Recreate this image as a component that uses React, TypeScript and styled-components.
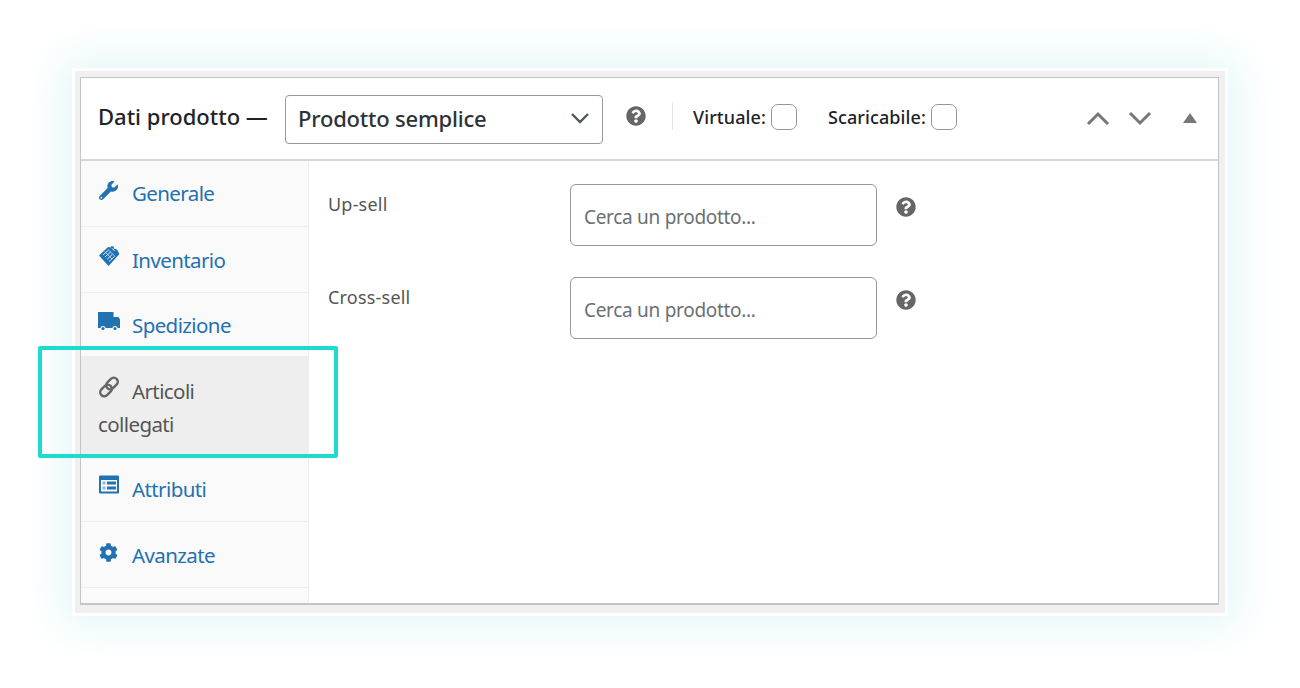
import React from "react";
import styled, { createGlobalStyle } from "styled-components";
import { FaWrench, FaCog, FaQuestionCircle } from "react-icons/fa";

const Global = createGlobalStyle`
  html, body { margin: 0; padding: 0; background: #fff; }
  body { width: 1300px; height: 688px; overflow: hidden; font-family: "Noto Sans", "Open Sans", sans-serif; }
`;
const Page = styled.div`
  position: relative;
  width: 1300px;
  height: 688px;
  padding: 68px 72px 0;
  box-sizing: border-box;
`;
const Frame = styled.div`
  width: 1156px;
  height: 548px;
  box-sizing: border-box;
  background: #f0f0f1;
  border: 3px solid #fff;
  padding: 6px 6px 8px 5px;
  box-shadow: 0 0 40px 8px rgba(190, 235, 240, 0.45);
`;
const Panel = styled.div`
  height: 100%;
  box-sizing: border-box;
  background: #fff;
  border: 1px solid #c3c4c7;
  border-width: 1px 1px 2px 1px;
  display: flex;
  flex-direction: column;
`;
const Header = styled.div`
  height: 83px;
  flex: none;
  box-sizing: border-box;
  border-bottom: 2px solid #d6d7da;
  display: flex;
  align-items: center;
  padding: 0 21px 0 17px;
  color: #1d2327;
`;
const Title = styled.div`
  font-size: 22px;
  font-weight: 500;
  width: 187px;
  margin-top: -5px;
  letter-spacing: 0;
`;
const Select = styled.div`
  width: 318px;
  height: 49px;
  box-sizing: border-box;
  border: 1px solid #94979c;
  border-radius: 4px;
  display: flex;
  align-items: center;
  justify-content: space-between;
  padding: 0 12px 3px 12px;
  font-size: 22px;
  font-weight: 500;
  letter-spacing: -0.2px;
  color: #2c3338;
  margin-top: 2px;
`;
const HelpIcon = styled(FaQuestionCircle)`
  color: #666;
  width: 20px;
  height: 20px;
  flex: none;
`;
const HeaderHelp = styled.div`
  margin: -6px 0 0 23px;
  padding-right: 26px;
  display: flex;
`;
const Checks = styled.div`
  display: flex;
  align-items: center;
  height: 27px;
  border-left: 1px solid #e4e4e6;
  padding-left: 20px;
  margin-top: -4px;
  gap: 31px;
`;
const CheckLabel = styled.label`
  display: flex;
  align-items: center;
  gap: 5px;
  font-size: 18px;
  font-weight: 500;
  letter-spacing: 0.1px;
`;
const Box = styled.span`
  width: 26px;
  height: 26px;
  box-sizing: border-box;
  border: 1px solid #94979c;
  border-radius: 7px;
  background: #fff;
`;
const Arrows = styled.div`
  margin-left: auto;
  display: flex;
  align-items: center;
  gap: 16px;
  margin-top: -2px;
`;
const Body = styled.div`
  flex: 1;
  display: flex;
  min-height: 0;
`;
const Sidebar = styled.nav`
  width: 228px;
  flex: none;
  box-sizing: border-box;
  background: #fafafa;
  border-right: 1px solid #eee;
  display: flex;
  flex-direction: column;
`;
const Tab = styled.a<{ $active?: boolean; $h: number; $top: number }>`
  display: block;
  height: ${(p) => p.$h}px;
  box-sizing: border-box;
  padding: ${(p) => p.$top}px 17px 0;
  border-bottom: ${(p) => (p.$active ? "0" : "1px solid #eee")};
  background: ${(p) => (p.$active ? "#eee" : "transparent")};
  color: ${(p) => (p.$active ? "#555" : "#2271b1")};
  font-size: 20.5px;
  line-height: 33px;
  letter-spacing: -0.6px;
`;
const IconSlot = styled.span<{ $active?: boolean }>`
  display: inline-block;
  width: 34px;
  height: 22px;
  vertical-align: 1px;
  color: ${(p) => (p.$active ? "#666" : "#2271b1")};
  svg {
    display: block;
    width: 22px;
    height: 22px;
  }
`;
const SmallIconSlot = styled(IconSlot)`
  svg {
    width: 19px;
    height: 19px;
    margin: 3px 0 0 1px;
  }
`;
const Content = styled.div`
  flex: 1;
  padding: 23px 19px;
  display: flex;
  flex-direction: column;
  gap: 31px;
`;
const Row = styled.div`
  display: flex;
  align-items: flex-start;
`;
const FieldLabel = styled.div`
  width: 242px;
  font-size: 18px;
  line-height: 24px;
  margin-top: 8px;
  letter-spacing: 0.2px;
  color: #555;
`;
const Input = styled.div`
  width: 307px;
  height: 62px;
  box-sizing: border-box;
  border: 1px solid #94979c;
  border-radius: 6px;
  padding: 20px 13px 0;
  font-size: 19px;
  line-height: 24px;
  letter-spacing: -0.3px;
  color: #6b6f73;
`;
const RowHelp = styled.div`
  margin: 13px 0 0 19px;
  display: flex;
`;
const Highlight = styled.div`
  position: absolute;
  left: 38px;
  top: 346px;
  width: 300px;
  height: 112px;
  box-sizing: border-box;
  border: 4px solid #1cdccf;
  border-radius: 2px;
  pointer-events: none;
`;
const ChevronSvg = styled.svg`
  display: block;
  color: #777;
`;
const TriangleSvg = styled.svg`
  display: block;
  margin-left: 14px;
`;

const Chevron = ({ up }: { up?: boolean }) => (
  <ChevronSvg width="26" height="16" viewBox="0 0 26 16" fill="none">
    <path d={up ? "M3 14 L13 4 L23 14" : "M3 3 L13 13 L23 3"} stroke="currentColor" strokeWidth="3" />
  </ChevronSvg>
);
const SelectChevron = () => (
  <svg width="20" height="12" viewBox="0 0 20 12" fill="none">
    <path d="M2 2 L10 10 L18 2" stroke="#50575e" strokeWidth="2.4" />
  </svg>
);
const TagIcon = () => (
  <svg viewBox="0 0 22 22" fill="currentColor">
    <path d="M1 10.5 L10 2 L12.5 2.6 L13.5 1 L16 1.8 L15.6 3.6 L19 4.4 L21.5 9 L10.5 21 Z" />
    <path d="M5 10 L10.5 5 M7 12 L12.5 7 M9 14.4 L14.5 9.2 M11 16.6 L16.5 11.4" stroke="#cfe2f3" strokeWidth="1" />
    <path d="M7 6.5 L14 14 M10 4.5 L17 11.5" stroke="#cfe2f3" strokeWidth="0.8" />
    <path d="M14 3.4 L16.4 5.8" stroke="#fff" strokeWidth="1" />
  </svg>
);
const TruckIcon = () => (
  <svg viewBox="0 0 22 22" fill="currentColor">
    <path d="M0 2 H15.5 V7 H20.5 L22 9.5 V18 H0 Z" />
    <circle cx="5" cy="18.5" r="2.6" fill="#fff" />
    <circle cx="5" cy="18.5" r="1.6" />
    <circle cx="17" cy="18.5" r="2.6" fill="#fff" />
    <circle cx="17" cy="18.5" r="1.6" />
  </svg>
);
const LinkIcon = () => (
  <svg viewBox="0 0 22 22" fill="none" stroke="currentColor" strokeWidth="2.5">
    <rect x="1.5" y="10.5" width="13" height="8" rx="4" transform="rotate(-45 8 14.5)" />
    <rect x="7.5" y="3.5" width="13" height="8" rx="4" transform="rotate(-45 14 7.5)" />
  </svg>
);
const AttrIcon = () => (
  <svg viewBox="0 0 22 22" fill="currentColor">
    <path fillRule="evenodd" d="M1 2.5 Q1 1.5 2 1.5 H20 Q21 1.5 21 2.5 V18.5 Q21 19.5 20 19.5 H2 Q1 19.5 1 18.5 Z M3 6 V17.5 H19 V6 Z" />
    <path d="M4.5 7.5 H7.5 V10.5 H4.5 Z M4.5 12.5 H7.5 V15.5 H4.5 Z" fill="#8ab8dc" />
    <path d="M9 7.5 H18 V10.5 H9 Z M9 12.5 H18 V15.5 H9 Z" />
  </svg>
);
const Triangle = () => (
  <TriangleSvg width="14" height="10" viewBox="0 0 14 10">
    <path d="M0 10 L7 0 L14 10 Z" fill="#777" />
  </TriangleSvg>
);

export default function App() {
  return (
    <Page>
      <Global />
      <Frame>
        <Panel>
          <Header>
            <Title>Dati prodotto —</Title>
            <Select>
              Prodotto semplice
              <SelectChevron />
            </Select>
            <HeaderHelp><HelpIcon /></HeaderHelp>
            <Checks>
              <CheckLabel>Virtuale:<Box /></CheckLabel>
              <CheckLabel>Scaricabile:<Box /></CheckLabel>
            </Checks>
            <Arrows>
              <Chevron up />
              <Chevron />
              <Triangle />
            </Arrows>
          </Header>
          <Body>
            <Sidebar>
              <Tab $h={66} $top={16}><SmallIconSlot><FaWrench /></SmallIconSlot>Generale</Tab>
              <Tab $h={66} $top={17}><IconSlot><TagIcon /></IconSlot>Inventario</Tab>
              <Tab $h={64} $top={16}><IconSlot><TruckIcon /></IconSlot>Spedizione</Tab>
              <Tab $h={99} $top={18} $active><IconSlot $active><LinkIcon /></IconSlot>Articoli<br />collegati</Tab>
              <Tab $h={66} $top={17}><IconSlot><AttrIcon /></IconSlot>Attributi</Tab>
              <Tab $h={66} $top={17}><SmallIconSlot><FaCog /></SmallIconSlot>Avanzate</Tab>
            </Sidebar>
            <Content>
              <Row>
                <FieldLabel>Up-sell</FieldLabel>
                <Input>Cerca un prodotto...</Input>
                <RowHelp><HelpIcon /></RowHelp>
              </Row>
              <Row>
                <FieldLabel>Cross-sell</FieldLabel>
                <Input>Cerca un prodotto...</Input>
                <RowHelp><HelpIcon /></RowHelp>
              </Row>
            </Content>
          </Body>
        </Panel>
      </Frame>
      <Highlight />
    </Page>
  );
}
